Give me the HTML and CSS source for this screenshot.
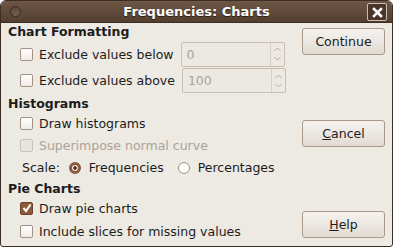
FILE: index.html
```html
<!DOCTYPE html>
<html lang="en">
<head>
  <meta charset="UTF-8">
  <title>Frequencies: Charts</title>
  <link rel="stylesheet" href="styles.css">
</head>
<body>
  <div class="window">
    <div class="titlebar">
      <span class="menu-dot"></span>
      <span class="title">Frequencies: Charts</span>
      <span class="close">
        <svg width="11" height="11" viewBox="0 0 11 11"><path d="M2 2 L9 9 M9 2 L2 9" stroke="#fff" stroke-width="2.6" stroke-linecap="square"/></svg>
      </span>
    </div>
    <div class="content">
      <div class="main">
        <div class="section-title first">Chart Formatting</div>
        <div class="row spin-row">
          <label class="check"><span class="box"></span>Exclude values below</label>
          <div class="spin">
            <span class="spin-value">0</span>
            <span class="spin-arrows">
              <svg width="7" height="18" viewBox="0 0 7 18"><path d="M0.5 6 L3.5 3 L6.5 6 M0.5 12 L3.5 15 L6.5 12" fill="none" stroke="#b3aaa0" stroke-width="1"/></svg>
            </span>
          </div>
        </div>
        <div class="row spin-row">
          <label class="check"><span class="box"></span>Exclude values above</label>
          <div class="spin">
            <span class="spin-value">100</span>
            <span class="spin-arrows">
              <svg width="7" height="18" viewBox="0 0 7 18"><path d="M0.5 6 L3.5 3 L6.5 6 M0.5 12 L3.5 15 L6.5 12" fill="none" stroke="#b3aaa0" stroke-width="1"/></svg>
            </span>
          </div>
        </div>

        <div class="section-title">Histograms</div>
        <div class="row"><label class="check"><span class="box"></span>Draw histograms</label></div>
        <div class="row tall"><label class="check disabled"><span class="box"></span>Superimpose normal curve</label></div>
        <div class="row scale">
          <span>Scale:</span>
          <label class="radio"><span class="dot on"></span>Frequencies</label>
          <label class="radio"><span class="dot"></span>Percentages</label>
        </div>

        <div class="section-title">Pie Charts</div>
        <div class="row pie"><label class="check"><span class="box checked">
          <svg width="10" height="10" viewBox="0 0 10 10"><path d="M1.5 5 L4 8 L8.5 1.5" fill="none" stroke="#fff" stroke-width="2"/></svg>
        </span>Draw pie charts</label></div>
        <div class="row last"><label class="check"><span class="box"></span>Include slices for missing values</label></div>
      </div>
      <div class="buttons">
        <button class="btn">Continue</button>
        <button class="btn"><u>C</u>ancel</button>
        <button class="btn"><u>H</u>elp</button>
      </div>
    </div>
  </div>
</body>
</html>
```
FILE: styles.css
```css
body {
  margin: 0;
  background: #ffffff;
  font-family: "DejaVu Sans", sans-serif;
  font-size: 12.5px;
  color: #1c1c1c;
}
.window {
  width: 391px;
  height: 245px;
  border: 1px solid #3d2e24;
  border-radius: 6px 6px 3px 3px;
  background: #ede9e3;
  overflow: hidden;
}
.titlebar {
  height: 21px;
  position: relative;
  display: flex;
  align-items: center;
  justify-content: center;
  background: linear-gradient(#6e5645, #533e30);
  border-bottom: 1px solid #3d2e24;
}
.title {
  color: #fff;
  font-weight: bold;
  font-size: 13px;
  text-shadow: 0 1px 1px #2a1d14;
}
.menu-dot {
  position: absolute;
  left: 9px;
  top: 5px;
  width: 9px;
  height: 9px;
  border-radius: 50%;
  border: 1px solid #3a2a1f;
  background: linear-gradient(#5e4838, #76604e);
}
.close {
  position: absolute;
  right: 5px;
  top: 2px;
  width: 18px;
  height: 16px;
  border: 1px solid #c9bcb0;
  border-radius: 2px;
  background: #4a3628;
  display: flex;
  align-items: center;
  justify-content: center;
}
.content {
  display: flex;
  height: 223px;
  padding: 0 7px 0 7px;
}
.main {
  flex: 1;
}
.section-title {
  font-weight: bold;
  height: 18px;
  line-height: 18px;
  margin-top: 1px;
}
.section-title.first {
  margin-top: 0;
}
.row {
  display: flex;
  align-items: center;
  height: 21px;
  padding-left: 12px;
}
.row.tall {
  height: 22px;
}
.row.pie {
  height: 20px;
}
.row.last {
  height: 22px;
  margin-top: 2px;
}
.spin-row {
  height: 26px;
}
.spin-row + .spin-row {
  height: 27px;
}
.check, .radio {
  display: flex;
  align-items: center;
}
.box {
  width: 11px;
  height: 11px;
  border: 1px solid #a39281;
  border-radius: 2px;
  background: linear-gradient(#ffffff, #f0ece8);
  margin-right: 6px;
  display: flex;
  align-items: center;
  justify-content: center;
}
.box.checked {
  background: #8b5a3c;
  border-color: #6b4129;
}
.check.disabled {
  color: #aaa399;
}
.check.disabled .box {
  background: #e8e4df;
  border-color: #cbc2b8;
}
.spin {
  display: flex;
  width: 102px;
  height: 23px;
  margin-left: 7px;
  border: 1px solid #cbbfb3;
  border-radius: 2px;
  background: #ece8e2;
}
.spin-value {
  flex: 1;
  color: #aaa399;
  padding-left: 5px;
  line-height: 23px;
}
.spin-arrows {
  width: 13px;
  border-left: 1px solid #d8cfc6;
  display: flex;
  align-items: center;
  justify-content: center;
}
.scale {
  height: 23px;
  padding-left: 14px;
}
.radio {
  margin-left: 9px;
}
.radio + .radio {
  margin-left: 14px;
}
.dot {
  box-sizing: border-box;
  width: 12px;
  height: 12px;
  border-radius: 50%;
  border: 1px solid #a39281;
  background: #fff;
  margin-right: 8px;
}
.dot.on {
  border: 3px solid #8b5a3c;
  background: radial-gradient(circle, #5a3420 0 1.5px, #f4ece6 2px);
}
.buttons {
  width: 83px;
  display: flex;
  flex-direction: column;
  justify-content: space-between;
  padding-top: 5px;
  padding-bottom: 8px;
}
.btn {
  height: 27px;
  font-family: "DejaVu Sans", sans-serif;
  font-size: 12.5px;
  color: #1c1c1c;
  border: 1px solid #a8998a;
  border-radius: 3px;
  background: linear-gradient(#f5f2ee, #e2dbd4);
  padding: 0;
}
```
